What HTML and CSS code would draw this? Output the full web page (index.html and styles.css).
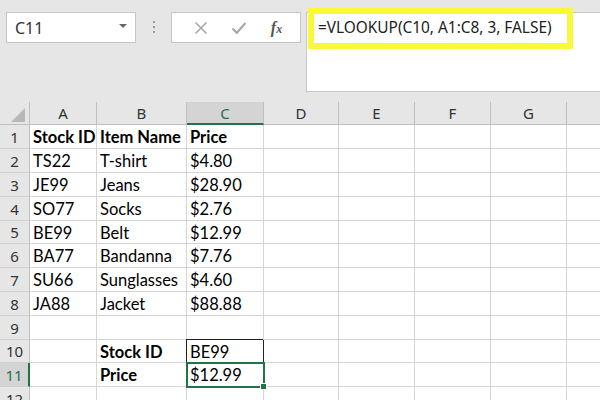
FILE: index.html
```html
<!DOCTYPE html>
<html lang="en">
<head>
    <meta charset="UTF-8">
    <title>VLOOKUP Example</title>
    <link rel="stylesheet" href="styles.css">
</head>
<body>

<div class="toolbar">
    <div class="name-box">
        <span>C11</span>
        <span class="caret"></span>
    </div>
    <div class="grip"><i></i><i></i><i></i></div>
    <div class="fx-box">
        <svg class="icon" width="14" height="14" viewBox="0 0 14 14">
            <path d="M1.5 1.5 L12.5 12.5 M12.5 1.5 L1.5 12.5" stroke="#a8a8a8" stroke-width="1.6" fill="none"/>
        </svg>
        <svg class="icon" width="16" height="14" viewBox="0 0 16 14">
            <path d="M1.5 7.5 L5.8 11.8 L14.5 2" stroke="#a8a8a8" stroke-width="2.2" fill="none"/>
        </svg>
        <span class="fx">f<small>x</small></span>
    </div>
    <div class="formula-bar">
        <div class="formula">=VLOOKUP(C10, A1:C8, 3, FALSE)</div>
    </div>
</div>

<div class="sheet">
    <div class="row head">
        <div class="corner">
            <svg width="14" height="14" viewBox="0 0 14 14"><polygon points="14,0 14,14 0,14" fill="#b8b8b8"/></svg>
        </div>
        <div class="col">A</div><div class="col">B</div><div class="col active">C</div><div class="col">D</div>
        <div class="col">E</div><div class="col">F</div><div class="col">G</div><div class="col"></div>
    </div>
    <div class="row">
        <div class="rh">1</div><div class="c bold">Stock ID</div><div class="c bold">Item Name</div><div class="c bold">Price</div>
        <div class="c"></div><div class="c"></div><div class="c"></div><div class="c"></div><div class="c"></div>
    </div>
    <div class="row">
        <div class="rh">2</div><div class="c">TS22</div><div class="c">T-shirt</div><div class="c">$4.80</div>
        <div class="c"></div><div class="c"></div><div class="c"></div><div class="c"></div><div class="c"></div>
    </div>
    <div class="row">
        <div class="rh">3</div><div class="c">JE99</div><div class="c">Jeans</div><div class="c">$28.90</div>
        <div class="c"></div><div class="c"></div><div class="c"></div><div class="c"></div><div class="c"></div>
    </div>
    <div class="row">
        <div class="rh">4</div><div class="c">SO77</div><div class="c">Socks</div><div class="c">$2.76</div>
        <div class="c"></div><div class="c"></div><div class="c"></div><div class="c"></div><div class="c"></div>
    </div>
    <div class="row short">
        <div class="rh">5</div><div class="c">BE99</div><div class="c">Belt</div><div class="c">$12.99</div>
        <div class="c"></div><div class="c"></div><div class="c"></div><div class="c"></div><div class="c"></div>
    </div>
    <div class="row">
        <div class="rh">6</div><div class="c">BA77</div><div class="c">Bandanna</div><div class="c">$7.76</div>
        <div class="c"></div><div class="c"></div><div class="c"></div><div class="c"></div><div class="c"></div>
    </div>
    <div class="row">
        <div class="rh">7</div><div class="c">SU66</div><div class="c">Sunglasses</div><div class="c">$4.60</div>
        <div class="c"></div><div class="c"></div><div class="c"></div><div class="c"></div><div class="c"></div>
    </div>
    <div class="row">
        <div class="rh">8</div><div class="c">JA88</div><div class="c">Jacket</div><div class="c">$88.88</div>
        <div class="c"></div><div class="c"></div><div class="c"></div><div class="c"></div><div class="c"></div>
    </div>
    <div class="row">
        <div class="rh">9</div><div class="c"></div><div class="c"></div><div class="c"></div>
        <div class="c"></div><div class="c"></div><div class="c"></div><div class="c"></div><div class="c"></div>
    </div>
    <div class="row short">
        <div class="rh">10</div><div class="c"></div><div class="c bold">Stock ID</div><div class="c boxed">BE99</div>
        <div class="c"></div><div class="c"></div><div class="c"></div><div class="c"></div><div class="c"></div>
    </div>
    <div class="row">
        <div class="rh active">11</div><div class="c"></div><div class="c bold">Price</div><div class="c selected">$12.99</div>
        <div class="c"></div><div class="c"></div><div class="c"></div><div class="c"></div><div class="c"></div>
    </div>
    <div class="row">
        <div class="rh">12</div><div class="c"></div><div class="c"></div><div class="c"></div>
        <div class="c"></div><div class="c"></div><div class="c"></div><div class="c"></div><div class="c"></div>
    </div>
</div>

</body>
</html>
```
FILE: styles.css
```css
body {
    margin: 0;
    width: 600px;
    height: 400px;
    overflow: hidden;
    background-color: #e6e6e6;
    font-family: "Noto Sans", sans-serif;
}
.toolbar {
    display: flex;
    align-items: flex-start;
    height: 102px;
    padding: 12px 0 0 6px;
    box-sizing: border-box;
}
.name-box {
    display: flex;
    align-items: center;
    justify-content: space-between;
    width: 130px;
    height: 31px;
    padding: 0 8px 0 8px;
    box-sizing: border-box;
    background-color: white;
    border: 1px solid #c6c6c6;
    font-size: 16px;
    color: #333;
}
.caret {
    width: 0;
    height: 0;
    border-left: 4px solid transparent;
    border-right: 4px solid transparent;
    border-top: 4px solid #666;
    margin-top: -3px;
}
.grip {
    display: flex;
    flex-direction: column;
    align-items: center;
    gap: 3px;
    width: 35px;
    padding-top: 9px;
}
.grip i {
    width: 2px;
    height: 2px;
    background-color: #9a9a9a;
}
.fx-box {
    display: flex;
    align-items: center;
    justify-content: space-around;
    width: 130px;
    height: 31px;
    padding: 0 6px 0 10px;
    box-sizing: border-box;
    background-color: white;
    border: 1px solid #c6c6c6;
}
.fx {
    font-family: "Liberation Serif", serif;
    font-style: italic;
    font-weight: bold;
    font-size: 16px;
    color: #555;
}
.fx small {
    font-size: 12px;
}
.formula-bar {
    position: relative;
    flex: 1;
    height: 78px;
    margin-left: 5px;
    background-color: white;
    border: 1px solid #c6c6c6;
    border-right: none;
}
.formula {
    position: absolute;
    left: 1px;
    top: -5px;
    width: 249px;
    height: 29px;
    padding-left: 4px;
    border: 6px solid #f9f93a;
    font-size: 15.4px;
    line-height: 28px;
    color: #222;
    white-space: nowrap;
}

/* sheet grid */
.sheet {
    width: 600px;
    overflow: hidden;
}
.row {
    display: grid;
    grid-template-columns: 30px 67px 90px 77px 75px 76px 76px 76px 76px;
    height: 24px;
    background-color: white;
}
.row.short {
    height: 23px;
}
.row.head {
    height: 23px;
    background-color: #e6e6e6;
}
.corner {
    display: flex;
    align-items: flex-end;
    justify-content: flex-end;
    padding: 0 4px 2px 0;
    border-right: 1px solid #c0c0c0;
    border-bottom: 1px solid #c0c0c0;
}
.col {
    display: flex;
    align-items: center;
    justify-content: center;
    border-right: 1px solid #c0c0c0;
    border-bottom: 1px solid #c0c0c0;
    font-size: 15px;
    color: #333;
}
.col.active {
    background-color: #d4d4d4;
    color: #217346;
    border-bottom: 2px solid #217346;
}
.rh {
    display: flex;
    align-items: center;
    justify-content: center;
    background-color: #e6e6e6;
    border-right: 1px solid #c0c0c0;
    border-bottom: 1px solid #d0d0d0;
    font-size: 15px;
    color: #333;
}
.rh.active {
    background-color: #d4d4d4;
    color: #217346;
    border-right: 2px solid #217346;
}
.c {
    display: flex;
    align-items: center;
    padding: 1px 0 0 3px;
    border-right: 1px solid #d6d6d6;
    border-bottom: 1px solid #d6d6d6;
    font-family: Lato, sans-serif;
    font-size: 16.5px;
    color: #000;
    white-space: nowrap;
    overflow: hidden;
}
.c.bold {
    font-weight: bold;
}
.c.boxed {
    position: relative;
    z-index: 1;
    border-color: #222;
    box-shadow: -1px -1px 0 0 #222;
}
.c.selected {
    position: relative;
    z-index: 2;
    overflow: visible;
    outline: 2px solid #217346;
    outline-offset: -1px;
}
.c.selected::after {
    content: "";
    position: absolute;
    right: -4px;
    bottom: -4px;
    width: 5px;
    height: 5px;
    background-color: #217346;
    border: 1px solid white;
}
```
